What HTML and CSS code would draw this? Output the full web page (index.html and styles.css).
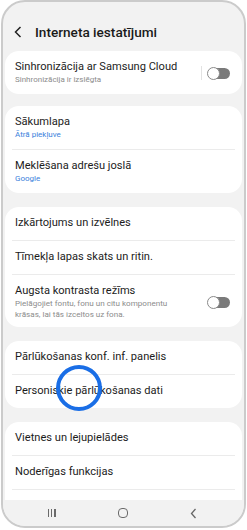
FILE: index.html
```html
<!DOCTYPE html>
<html lang="lv">
<head>
<meta charset="utf-8">
<link rel="stylesheet" href="styles.css">
</head>
<body>
<div class="phone">
  <div class="content">
    <div class="header">
      <svg class="back" width="8" height="12" viewBox="0 0 8 12"><polyline points="6.5,1 1.5,6 6.5,11" fill="none" stroke="#222" stroke-width="1.5"/></svg>
      <span class="htitle">Interneta iestatījumi</span>
    </div>

    <div class="card">
      <div class="row two">
        <div class="txt">
          <div class="title">Sinhronizācija ar Samsung Cloud</div>
          <div class="sub">Sinhronizācija ir izslēgta</div>
        </div>
        <div class="vdiv"></div>
        <div class="toggle"><span class="thumb"></span></div>
      </div>
    </div>

    <div class="card">
      <div class="row two">
        <div class="txt">
          <div class="title">Sākumlapa</div>
          <div class="sub blue">Ātrā piekļuve</div>
        </div>
      </div>
      <div class="row two">
        <div class="txt">
          <div class="title">Meklēšana adrešu joslā</div>
          <div class="sub blue">Google</div>
        </div>
      </div>
    </div>

    <div class="card">
      <div class="row one"><div class="title">Izkārtojums un izvēlnes</div></div>
      <div class="row one"><div class="title">Tīmekļa lapas skats un ritin.</div></div>
      <div class="row multi">
        <div class="txt">
          <div class="title">Augsta kontrasta režīms</div>
          <div class="sub ml">Pielāgojiet fontu, fonu un citu komponentu krāsas, lai tās izceltos uz fona.</div>
        </div>
        <div class="toggle"><span class="thumb"></span></div>
      </div>
    </div>

    <div class="card">
      <div class="row one"><div class="title">Pārlūkošanas konf. inf. panelis</div></div>
      <div class="row one"><div class="title">Personiskie pārlūkošanas dati</div></div>
    </div>

    <div class="card">
      <div class="row one"><div class="title">Vietnes un lejupielādes</div></div>
      <div class="row one"><div class="title">Noderīgas funkcijas</div></div>
      <div class="row one"><div class="title">Laba</div></div>
    </div>
  </div>

  <div class="nav">
    <span class="recent"><i></i><i></i><i></i></span>
    <span class="home"></span>
    <svg class="navback" width="7" height="11" viewBox="0 0 7 11"><polyline points="5.5,1 1.5,5.5 5.5,10" fill="none" stroke="#666" stroke-width="1.3"/></svg>
  </div>

  <div class="ring"></div>
</div>
</body>
</html>
```

FILE: styles.css
```css
* { box-sizing: border-box; }
html, body { margin: 0; padding: 0; background: #fff; }
body { font-family: Roboto, "Noto Sans", Arial, sans-serif; color: #1c1c1c; }

.phone {
  position: relative;
  margin-left: 1px;
  width: 245px;
  height: 528px;
  border: 2px solid #cbcbcb;
  border-radius: 24px;
  background: #f2f2f2;
  overflow: hidden;
  display: flex;
  flex-direction: column;
}

.content {
  flex: 1;
  overflow: hidden;
  padding: 0 2px;
}

.header {
  height: 49px;
  padding: 19px 0 0 9px;
  display: flex;
  align-items: flex-start;
}
.back { margin-top: 5px; flex: none; }
.htitle {
  margin-left: 13px;
  font-size: 13.6px;
  line-height: 22px;
  font-weight: 500;
  color: #1a1a1a;
}

.card {
  background: #fff;
  border-radius: 14px;
  margin-bottom: 14px;
  overflow: hidden;
}
.card:nth-child(2) { margin-bottom: 12px; }

.row {
  margin: 0 7px;
  padding: 0 3px;
  display: flex;
  align-items: center;
}
.row + .row { border-top: 1px solid #ebebeb; }
.row.two { padding-top: 9px; padding-bottom: 8px; }
.row.one { padding-top: 9px; padding-bottom: 10px; }
.row.multi { padding-top: 9px; padding-bottom: 7px; }

.txt { flex: 1; min-width: 0; }
.title {
  font-size: 11.1px;
  line-height: 14px;
  color: #1c1c1c;
  white-space: nowrap;
}
.sub {
  font-size: 8px;
  line-height: 12px;
  color: #8c8c8c;
}
.sub.blue { color: #3b7fdc; }
.sub.ml { line-height: 11px; max-width: 172px; font-size: 8.1px; }

.vdiv {
  width: 1px;
  height: 14px;
  background: #e2e2e2;
  margin-right: 6px;
}
.toggle {
  position: relative;
  width: 22px;
  height: 11px;
  border-radius: 6px;
  background: #7a7a7a;
  margin-right: 2px;
  flex: none;
}
.thumb {
  position: absolute;
  left: -1px;
  top: -1px;
  width: 13px;
  height: 13px;
  border-radius: 50%;
  background: #fff;
  border: 1.3px solid #8a8a8a;
}

.nav {
  height: 26px;
  flex: none;
  background: #f2f2f2;
  display: flex;
  align-items: center;
  justify-content: space-between;
  padding: 0 47px 0 45px;
}
.recent { display: flex; gap: 2px; height: 8px; }
.recent i { display: block; width: 1.2px; height: 8px; background: #6a6a6a; }
.home {
  width: 10px;
  height: 10px;
  border: 1.3px solid #6a6a6a;
  border-radius: 4px;
}

.ring {
  position: absolute;
  left: 53px;
  top: 363px;
  width: 46px;
  height: 46px;
  border: 4px solid #1a6ee6;
  border-radius: 50%;
}
```
